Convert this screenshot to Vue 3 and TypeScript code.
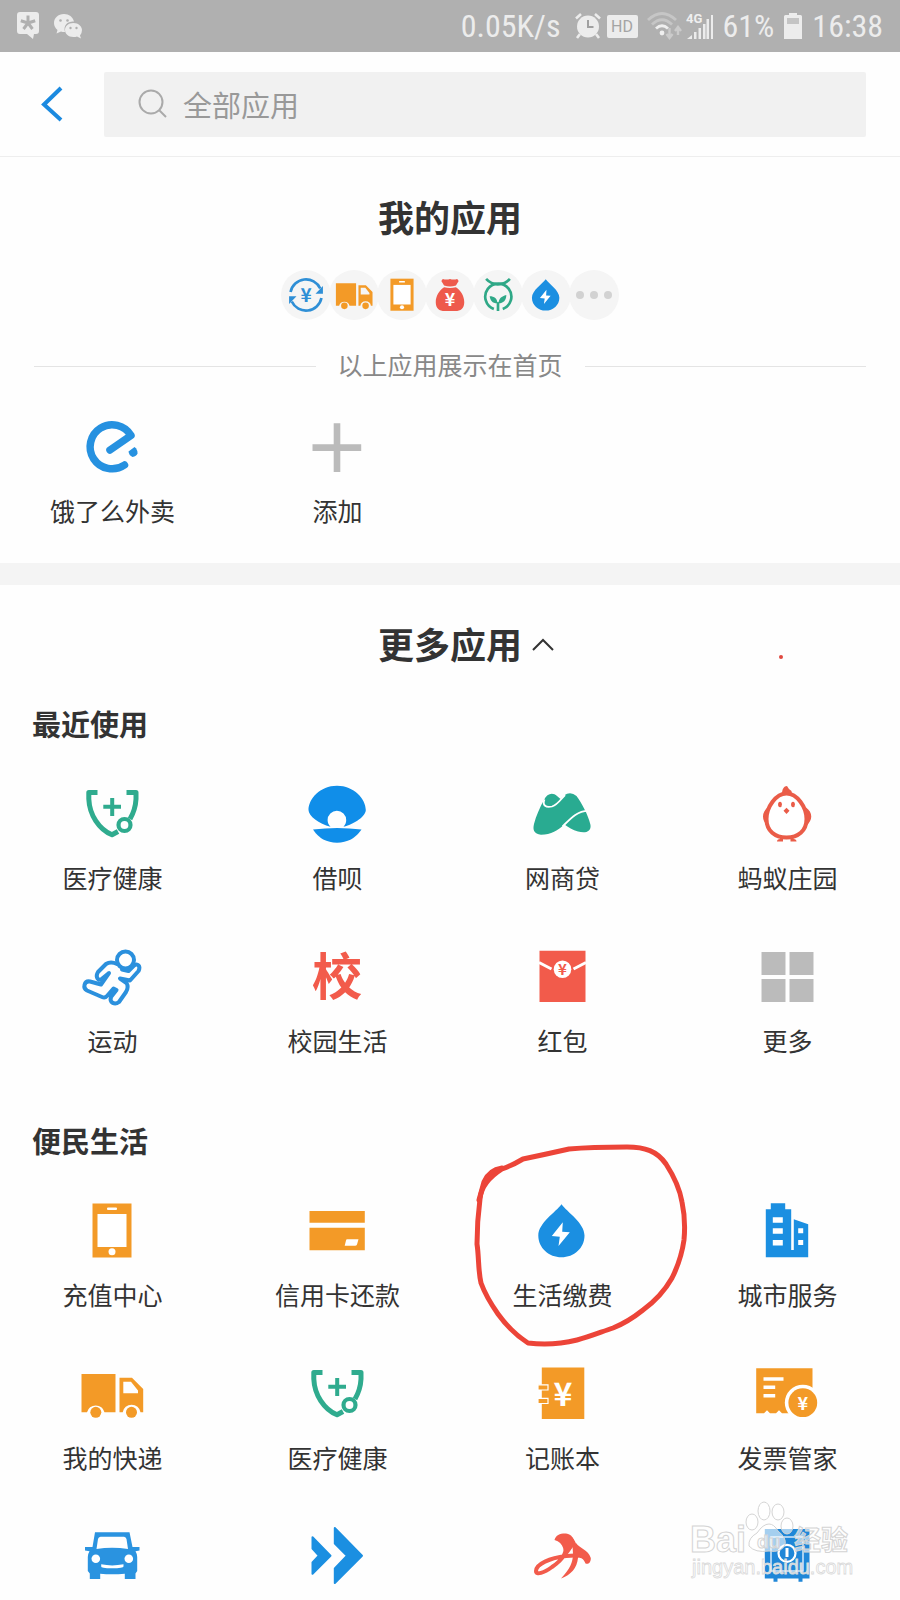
<script setup lang="ts">
import { ref } from 'vue'

interface AppItem {
  icon: string
  name: string
}

interface Glyph {
  text: string
  x: number
  y: number
  size: number
  fill: string
}

const keyword = ref('')
const expanded = ref(true)

// Characters that sit on top of an icon's shape, on the same 64 x 64 grid
const glyphs: Record<string, Glyph> = {
  transfer: { text: '¥', x: 32, y: 44, size: 32, fill: '#2f8fd6' },
  bag: { text: '¥', x: 32, y: 50, size: 30, fill: '#fff' },
  school: { text: '校', x: 32, y: 50, size: 50, fill: '#f25b4b' },
  packet: { text: '¥', x: 32.5, y: 30, size: 15, fill: '#f25b4b' },
  ledger: { text: '¥', x: 33, y: 44, size: 32, fill: '#fff' },
  invoice: { text: '¥', x: 47.8, y: 47.5, size: 18, fill: '#fff' },
}

const homeIcons: AppItem[] = [
  { icon: 'transfer', name: '转账' },
  { icon: 'truck', name: '我的快递' },
  { icon: 'phone', name: '充值中心' },
  { icon: 'bag', name: '余额宝' },
  { icon: 'sprout', name: '蚂蚁森林' },
  { icon: 'drop', name: '生活缴费' },
]

const myApps: AppItem[] = [
  { icon: 'ele', name: '饿了么外卖' },
  { icon: 'plus', name: '添加' },
]

const recent: AppItem[] = [
  { icon: 'shield', name: '医疗健康' },
  { icon: 'shell', name: '借呗' },
  { icon: 'bank', name: '网商贷' },
  { icon: 'chick', name: '蚂蚁庄园' },
  { icon: 'runner', name: '运动' },
  { icon: 'school', name: '校园生活' },
  { icon: 'packet', name: '红包' },
  { icon: 'more', name: '更多' },
]

const living: AppItem[] = [
  { icon: 'phone', name: '充值中心' },
  { icon: 'card', name: '信用卡还款' },
  { icon: 'drop', name: '生活缴费' },
  { icon: 'city', name: '城市服务' },
  { icon: 'truck', name: '我的快递' },
  { icon: 'shield', name: '医疗健康' },
  { icon: 'ledger', name: '记账本' },
  { icon: 'invoice', name: '发票管家' },
]

const livingMore: AppItem[] = [
  { icon: 'car', name: '车主服务' },
  { icon: 'arrows', name: '出行' },
  { icon: 'swoosh', name: '办事' },
  { icon: 'safe', name: '保险箱' },
]
</script>

<template>
  <div class="page">
    <!-- Shared icon shapes, all on a 64 x 64 grid -->
    <svg class="sprite" width="0" height="0" aria-hidden="true">
      <symbol id="transfer" viewBox="0 0 64 64">
        <g fill="none" stroke="#2f8fd6" stroke-width="4.500">
          <path d="M6 27A26.500 26.500 0 0 1 56 21" />
          <path d="M58 37A26.500 26.500 0 0 1 8 43" />
        </g>
        <path d="M60.500 17v13H48zM3.500 47V34H16z" fill="#2f8fd6" />
      </symbol>
      <symbol id="truck" viewBox="0 0 64 64">
        <g fill="#f39a27">
          <path d="M1.500 12H35.500V50.300H24.500A9 9 0 0 0 7 50.300H1.500z" />
          <path fill-rule="evenodd" d="M39.500 15.700H52L63.200 27V50.300H60.500A9 9 0 0 0 42.700 50.300H39.500zM43.300 19.700V31.300H58V28.500L51 19.700z" />
          <circle cx="15.800" cy="50.300" r="5.500" />
          <circle cx="51.500" cy="50.300" r="5.500" />
        </g>
      </symbol>
      <symbol id="phone" viewBox="0 0 64 64">
        <path d="M12.500 4.500h39v54h-39z" fill="#f39a27" />
        <path d="M17.500 15h29v33h-29z" fill="#fff" />
        <rect x="27" y="8.500" width="10" height="2.500" rx="1" fill="#fff" />
        <circle cx="32" cy="52.700" r="3.500" fill="#fff" />
      </symbol>
      <symbol id="bag" viewBox="0 0 64 64">
        <path d="M20 5q6 2 12 0q6 2 12 0q4 3 1 6l-3 5q-10 3-20 0l-3-5q-3-3 1-6z" fill="#ee5a4c" />
        <path d="M22 19q10 2 20 0C50 24 56 34 56 44C56 54 50 59 41 59H23C14 59 8 54 8 44C8 34 14 24 22 19z" fill="#ee5a4c" />
      </symbol>
      <symbol id="sprout" viewBox="0 0 64 64" fill="none" stroke="#2fa887" stroke-width="4.500">
        <path d="M12 5Q20 14 32 14T52 5" />
        <path d="M25 55.500A22 22 0 1 1 40 55.500" />
        <path d="M32 59V44" />
        <path d="M31 46C22 46 19 41 18 34C26 34 31 38 31 46zM33 46C33 38 38 34 46 32C46 41 41 46 33 46z" fill="#2fa887" stroke="none" />
      </symbol>
      <symbol id="drop" viewBox="0 0 64 64">
        <path d="M31.500 5.300C37 13 54.500 24 54.500 36.500C54.500 49 44 58.300 31.500 58.300S8.300 49 8.300 36.500C8.300 24 26 13 31.500 5.300z" fill="#1b8fe1" />
        <path d="M32.800 23.300L21.800 37L29.800 37.700L28.500 47L39.800 33.300L32.200 32.700z" fill="#fff" />
      </symbol>
      <symbol id="ele" viewBox="0 0 64 64">
        <path d="M30 35L51 20.500A22 22 0 1 0 44.500 50" fill="none" stroke="#2691e0" stroke-width="7.500" stroke-linecap="round" stroke-linejoin="round" />
        <path d="M48.500 36.500L54.500 32Q57.800 34.500 57.500 38.500Q56.500 41 52.500 42Q49 40.500 48.500 36.500z" fill="#2691e0" />
      </symbol>
      <symbol id="plus" viewBox="0 0 64 64">
        <path d="M28.700 8.300h6.600v21h20.900v6.600H35.300V57h-6.600V35.900H7.500v-6.600h21.200z" fill="#bbb" />
      </symbol>
      <symbol id="shield" viewBox="0 0 64 64" fill="none" stroke="#2fab8e">
        <path d="M17.500 10.500H8.800V17C9.500 33 19 47.500 32 52.800L38 49.500M46.500 10.500H56V17C55.600 25 53.500 31 50 37" stroke-width="5" stroke-linejoin="round" />
        <circle cx="44.500" cy="43" r="6" stroke-width="4.200" />
        <path d="M32.200 16v18M23.300 24.800H41" stroke-width="4" />
      </symbol>
      <symbol id="shell" viewBox="0 0 64 64" fill="#108ee9">
        <path d="M32 3.700C49 3.700 60.800 17 60.800 28C60.800 34 50 42 38.500 44.700C40.500 42.500 41.200 40.500 41.200 38A9.300 9.300 0 1 0 22.600 38C22.600 41 23.700 43 25.500 44.700C14 42 3.500 34 3.500 28C3.500 17 15 3.700 32 3.700z" />
        <path d="M8 47.500Q32 44.500 56.500 47.500Q47.500 60.700 32 60.700T8 47.500z" />
      </symbol>
      <symbol id="bank" viewBox="0 0 64 64">
        <path d="M14 18C17 11 23 10 27 14L30.500 17L34 13.500Q40.500 9 46.500 14C51 20 58 32 60.500 43C61.500 50 55 51.500 48 49.500C43 48 38 45 34.500 42.500C28 48 21 52.700 11 52.700C4 52 2.500 48 4 42C6 34 10 25 14 18z" fill="#29ab91" />
        <path d="M14.500 17.500C12 23.500 16 26 22 24.500C28 22.500 30 18 35 13M32.500 44.500C41 36 47 29 58 28.800" fill="none" stroke="#fff" stroke-width="1.800" />
      </symbol>
      <symbol id="chick" viewBox="0 0 64 64">
        <g fill="#ea5c48">
          <path d="M27 12C27 7 29 4 32 4Q34 8 36.500 9L37 13z" />
          <path d="M12.500 25.500C7 30 6 38 12.500 44zM51 25.500C57.500 30 58.500 38 51 44z" />
          <path d="M28 56v3.500h-6q0-2.500 3-2.500v-2zM35.500 56v3.500h6q0-2.500-3-2.500v-2z" />
        </g>
        <path d="M31.500 11.500C42 11.500 51.500 25 51.500 37C51.500 49 43 55.500 31.500 55.500S11.500 49 11.500 37C11.500 25 21 11.500 31.500 11.500z" fill="#fff" stroke="#ea5c48" stroke-width="4" />
        <g fill="#ea5c48">
          <ellipse cx="25" cy="22.500" rx="1.900" ry="2.800" />
          <ellipse cx="38" cy="22.500" rx="1.900" ry="2.800" />
          <path d="M31.500 25.700L34.500 28.800L31.500 32L28.500 28.800z" />
        </g>
      </symbol>
      <symbol id="runner" viewBox="0 0 64 64" fill="none" stroke="#2b90dd" stroke-width="4" stroke-linejoin="round" stroke-linecap="round">
        <path d="M37 19C33 17 29 17 26 19L18 27C15.500 31 17 35.500 21 34.500L29 28L21 39.500L10 36.500C4 35.500 2.500 43 7 45.500L22 52Q25 53.300 27 51L33.500 43.500L36.500 45L31 52C29 58 35 60 39 57L46 47Q49 42 46.500 38L40 33.500L50 35.500L58.500 26C61 21 57.500 18 54 20.500L48.500 26L42 24.500" />
        <circle cx="45.500" cy="15" r="8.500" fill="#fff" />
      </symbol>
      <symbol id="packet" viewBox="0 0 64 64">
        <path d="M9.500 5.700h46V57h-46z" fill="#f25b4b" />
        <path d="M9 17.500L21.500 24M56 17.500L43.500 24" stroke="#fff" stroke-width="3" />
        <circle cx="32.500" cy="24.300" r="8.800" fill="#fff" />
      </symbol>
      <symbol id="more" viewBox="0 0 64 64">
        <path d="M6.500 7h24v23h-24zM34.500 7h24v23h-24zM6.500 34h24v23h-24zM34.500 34h24v23h-24z" fill="#bbb" />
      </symbol>
      <symbol id="card" viewBox="0 0 64 64">
        <path d="M4.500 12h55.300v11.700H4.500zM4.500 28.700h55.300v22.500H4.500z" fill="#f39a27" />
        <path d="M42 40.300H53.500L52 45.500Q51.500 46.700 50 46.700H39.700L41 41.500Q41.300 40.300 42 40.300z" fill="#fff" />
      </symbol>
      <symbol id="city" viewBox="0 0 64 64">
        <path d="M10.800 10.300h5v-6h14.400v6h6V51h2.600V20.300L53.200 25.300V58.300H10.800z" fill="#1b8fe1" />
        <path d="M17.800 18.300h10v5.400h-10zM17.800 29.300h10v5.400h-10zM17.800 41h10v5.400h-10zM43.200 29.300h5v5h-5zM43.200 41h5v5h-5z" fill="#fff" />
      </symbol>
      <symbol id="ledger" viewBox="0 0 64 64">
        <path d="M11.800 5.500h42.500V57H11.800z" fill="#f39a27" />
        <path d="M8 22.800h10v5.200H8zM8 36.300h10v5.200H8z" fill="#f39a27" stroke="#fff" stroke-width="1.200" />
      </symbol>
      <symbol id="invoice" viewBox="0 0 64 64">
        <path d="M1.200 6.300h56.300v45H27l-3-3-3 3h-6l-3-3-3 3H1.200z" fill="#f39a27" />
        <path d="M8.500 17h20M8.500 25.300h11.700M8.500 33.700h11.700" stroke="#fff" stroke-width="3.600" />
        <circle cx="47.800" cy="40.700" r="18" fill="#fff" />
        <circle cx="47.800" cy="40.700" r="14.400" fill="#f39a27" />
      </symbol>
      <symbol id="car" viewBox="0 0 64 64">
        <path fill-rule="evenodd" d="M15 7.300H49.500L52.500 22H59.500V25.500L55.500 26.300Q57.200 29 57.200 32V46L55.500 48.500V54H44.800V48.700Q32 50 20.200 48.700V54H9.800V48.500L7.800 46V32Q7.800 29 9.500 26.300L5 25.500V22H12.500zM20.500 11.700Q18.500 12 18 14L16.500 24Q32 21.300 48 24L46.500 14Q46 12 44 11.700z" fill="#2a93e0" />
        <circle cx="15.800" cy="33.700" r="4.300" fill="#fff" />
        <circle cx="48.800" cy="33.700" r="4.300" fill="#fff" />
        <path d="M21.200 39.300Q32 41.500 43.500 39.300V41.500Q43.500 43.300 32 43.300T21.200 41.500z" fill="#fff" />
      </symbol>
      <symbol id="arrows" viewBox="0 0 64 64" fill="#1b8fe1" stroke="#1b8fe1" stroke-width="2" stroke-linejoin="round">
        <path d="M7.500 12.200L25.500 30.700L7.500 48.700V37.500L13.800 30.700L7.500 23.500z" />
        <path d="M29.800 3L57 30.700L29.800 58V43.500L42 30.700L29.800 18.500z" />
      </symbol>
      <symbol id="swoosh" viewBox="0 0 64 64" fill="#f25b4b">
        <path d="M35 16C39 27 31 36 22 42C14 48 6 50.500 6 46C6 39 20 33 36 31C44 30 50 30 54 32" fill="none" stroke="#f25b4b" stroke-width="4" />
        <path d="M24.500 15C26 10 30 8.300 36 8.500C42 9 44 14 45 20C42 22 40 28 33 34C35 26 34 18 24.500 15z" />
        <path d="M42 12C47 18 49 26 48 33C47 43 41 50 31 53.500C40 44 43 37 43 29z" />
        <path d="M46 18C50 24 58 24 60.800 33C61 38 58 39.500 55.500 38.500C54 34 50 31 46 31z" />
      </symbol>
      <symbol id="safe" viewBox="0 0 64 64">
        <path d="M9.800 4h44.700v49.500h-7v3.200h-4v-3.200H22.500v3.200h-4v-3.200H9.800z" fill="#2087d8" />
        <path d="M16 12h32v34H16zM16 17v6M16 32v6" fill="none" stroke="#d5eafa" stroke-width="1.500" />
        <circle cx="32" cy="28.300" r="8.500" fill="none" stroke="#fff" stroke-width="2.200" />
        <path d="M32 23v9" stroke="#fff" stroke-width="3" />
      </symbol>
    </svg>

    <div class="status">
      <svg width="24" height="30" viewBox="0 0 24 30">
        <path d="M4 1h16q3 0 3 3v16q0 3-3 3h-2l-1 5-6-5H4q-3 0-3-3V4q0-3 3-3z" fill="#ececec" />
        <path d="M12 12V4.500M12 12L4.800 9.700M12 12L19.200 9.700M12 12L7.500 18M12 12L16.500 18" stroke="#b0b0b0" stroke-width="3" />
      </svg>
      <svg class="wechat" width="30" height="26" viewBox="0 0 30 26">
        <path d="M11 1C5 1 1 5 1 10q0 4 3.500 7L3.500 20.500 8 18.500q2 .6 4 .5C10 12 15 8 21 8.500 20 4 16 1 11 1z" fill="#ececec" />
        <path d="M20.500 10C15 10 12 13.500 12 17s3 7 8.500 7q2 0 3.500-.5l4 2-1-3Q29 20 29 17c0-3.500-3.500-7-8.500-7z" fill="#ececec" />
        <g fill="#b0b0b0"><circle cx="7.500" cy="7.500" r="1.300" /><circle cx="14.500" cy="7.500" r="1.300" /><circle cx="17.500" cy="15" r="1.200" /><circle cx="23.500" cy="15" r="1.200" /></g>
      </svg>
      <span class="reading speed">0.05K/s</span>
      <svg class="alarm" width="26" height="28" viewBox="0 0 26 28">
        <circle cx="13" cy="14.500" r="11" fill="#ececec" />
        <path d="M1 6.500L6 2M25 6.500L20 2M5 22l-3 4M21 22l3 4" stroke="#ececec" stroke-width="2.600" />
        <path d="M13 8v7h5.500" fill="none" stroke="#a0a0a0" stroke-width="2" />
      </svg>
      <span class="hd">HD</span>
      <svg class="wifi" width="36" height="28" viewBox="0 0 36 28">
        <g fill="none" stroke="#c6c6c6" stroke-width="2.800"><path d="M1 8Q15-5 29 8" /><path d="M5 12.500Q15 3 25 12.500" /></g>
        <path d="M9 16.500Q15 11 21 16.500" fill="none" stroke="#efefef" stroke-width="2.800" />
        <circle cx="15" cy="21" r="2.400" fill="#efefef" />
        <path d="M22.500 16v8M19.500 22l3 4 3-4M31 23v-6M28 19l3-4 3 4" fill="none" stroke="#cbcbcb" stroke-width="2.400" />
      </svg>
      <svg class="signal" width="28" height="28" viewBox="0 0 28 28">
        <text x="0" y="11" font-size="13" fill="#efefef">4G</text>
        <path d="M1 27l5-4v4zM8 20h2.500v7H8zM12.500 16H15v11h-2.500zM17 12h2.500v15H17zM20.500 7H23v20h-2.500zM25 3h2v24h-2z" fill="#ececec" />
      </svg>
      <span class="reading">61%</span>
      <svg class="battery" width="18" height="28" viewBox="0 0 18 28">
        <path d="M5 1h8v2h3.500q1.500 0 1.500 1.500V27H0V4.500Q0 3 1.500 3H5z" fill="#ececec" />
        <path d="M3 6h12v6H3z" fill="#c4c4c4" />
      </svg>
      <span class="reading">16:38</span>
    </div>

    <header class="header">
      <button class="back" type="button" aria-label="返回">
        <svg width="24" height="36" viewBox="0 0 24 36"><path d="M21 2L4 18.500L21 34" fill="none" stroke="#1b8ae0" stroke-width="4" /></svg>
      </button>
      <label class="search">
        <svg width="30" height="30" viewBox="0 0 30 30" fill="none" stroke="#aaa" stroke-width="2"><circle cx="13" cy="13" r="11.500" /><path d="M21 21l7 7" /></svg>
        <input v-model="keyword" type="search" aria-label="全部应用" placeholder="全部应用" />
      </label>
    </header>

    <main>
      <section class="mine">
        <h1 class="heading">我的应用</h1>
        <div class="bubbles">
          <span v-for="item in homeIcons" :key="item.icon" class="bubble" role="img" :aria-label="item.name">
            <svg width="38" height="38" viewBox="0 0 64 64">
              <use :href="'#' + item.icon" width="64" height="64" />
              <text v-if="glyphs[item.icon]" class="glyph" :x="glyphs[item.icon].x" :y="glyphs[item.icon].y" :font-size="glyphs[item.icon].size" :fill="glyphs[item.icon].fill">{{ glyphs[item.icon].text }}</text>
            </svg>
          </span>
          <span class="bubble">
            <svg width="38" height="38" viewBox="0 0 38 38" fill="#d2d2d2"><circle cx="5" cy="19" r="4" /><circle cx="19" cy="19" r="4" /><circle cx="33" cy="19" r="4" /></svg>
          </span>
        </div>
        <p class="divider">以上应用展示在首页</p>
        <div class="grid">
          <button v-for="item in myApps" :key="item.name" class="tile" type="button">
            <svg class="icon" width="64" height="64"><use :href="'#' + item.icon" /></svg>
            <span>{{ item.name }}</span>
          </button>
        </div>
      </section>

      <section class="others">
        <h1 class="heading">
          <button class="toggle" type="button" :aria-expanded="expanded" @click="expanded = !expanded">
            更多应用
            <svg class="caret" width="24" height="16" viewBox="0 0 24 16"><path d="M2 13L12 3L22 13" fill="none" stroke="#333" stroke-width="2" /></svg>
          </button>
          <i class="dot"></i>
        </h1>

        <template v-if="expanded">
          <h2 class="group">最近使用</h2>
          <div class="grid">
            <button v-for="item in recent" :key="item.name" class="tile" type="button">
              <svg class="icon" width="64" height="64" viewBox="0 0 64 64">
                <use :href="'#' + item.icon" width="64" height="64" />
                <text v-if="glyphs[item.icon]" class="glyph" :x="glyphs[item.icon].x" :y="glyphs[item.icon].y" :font-size="glyphs[item.icon].size" :fill="glyphs[item.icon].fill">{{ glyphs[item.icon].text }}</text>
              </svg>
              <span>{{ item.name }}</span>
            </button>
          </div>

          <h2 class="group">便民生活</h2>
          <div class="grid">
            <button v-for="item in living" :key="item.name" class="tile" type="button">
              <svg class="icon" width="64" height="64" viewBox="0 0 64 64">
                <use :href="'#' + item.icon" width="64" height="64" />
                <text v-if="glyphs[item.icon]" class="glyph" :x="glyphs[item.icon].x" :y="glyphs[item.icon].y" :font-size="glyphs[item.icon].size" :fill="glyphs[item.icon].fill">{{ glyphs[item.icon].text }}</text>
              </svg>
              <span>{{ item.name }}</span>
              <svg v-if="item.icon === 'drop'" class="scribble" width="225" height="210" viewBox="470 1140 225 210" fill="none" stroke="#ec4438" stroke-width="5" stroke-linecap="round" stroke-linejoin="round">
                <path d="M503 1169Q514 1165 524 1159Q548 1154 570 1149C592 1147 610 1147 628 1147C646 1147 658 1151 667 1164C676 1178 681 1190 683 1202C686 1216 686 1229 685 1240C683 1254 679 1266 673 1278C665 1292 655 1302 644 1310C634 1318 624 1324 614 1328C602 1332 590 1337 578 1340C562 1344 545 1345 529 1343C518 1336 507 1325 499 1314C492 1304 486 1294 482 1283C479 1270 480 1257 478 1244C478 1228 479 1214 481 1199C482 1186 492 1176 503 1169" />
                <path d="M503 1168Q490 1170 485 1182L480 1200" />
              </svg>
            </button>
          </div>
          <div class="grid last">
            <button v-for="item in livingMore" :key="item.name" class="tile" type="button" :aria-label="item.name">
              <svg class="icon" width="64" height="64"><use :href="'#' + item.icon" /></svg>
            </button>
            <svg class="mark" width="170" height="90" viewBox="0 0 170 90">
              <g fill="#fff" fill-opacity="0.6" stroke="#d4d4d4" stroke-width="1">
                <ellipse cx="64" cy="23" rx="6" ry="8" /><ellipse cx="76" cy="12" rx="6" ry="9" /><ellipse cx="90" cy="13" rx="6" ry="8" /><ellipse cx="99" cy="27" rx="6" ry="8" />
                <path d="M81 25Q86 25 90 32Q99 39 97 46Q93 54 81 52Q67 54 61 47Q60 39 69 34Q75 25 81 25z" />
                <text x="2" y="53" font-size="36" font-weight="700">Bai</text>
                <text x="69" y="49" font-size="19" font-weight="700">du</text>
                <text class="cjk" x="106" y="51" font-size="27" font-weight="700">经验</text>
              </g>
              <text x="4" y="75" font-size="20" fill="#fff" fill-opacity="0.8" stroke="#dadada" stroke-width="0.800">jingyan.baidu.com</text>
            </svg>
          </div>
        </template>
      </section>
    </main>
  </div>
</template>

<style>
body {
  margin: 0;
  background: #fefefe;
}
</style>

<style scoped>
.page {
  min-height: 100vh;
  overflow: hidden;
  background: #fefefe;
  color: #333;
  font-family: "Liberation Sans", "Noto Sans CJK SC", sans-serif;
}
.sprite {
  position: absolute;
}
svg {
  display: block;
  flex: none;
}
button {
  padding: 0;
  border: 0;
  background: none;
  color: inherit;
  font: inherit;
}
.icon {
  margin-right: 2px;
  overflow: visible;
}
.glyph {
  font-family: "Noto Sans CJK SC", sans-serif;
  font-weight: 700;
  text-anchor: middle;
}
.status {
  display: flex;
  align-items: center;
  height: 52px;
  padding: 0 17px 0 16px;
  background: #b0b0b0;
  color: #ececec;
}
.wechat {
  margin-left: 13px;
}
.reading {
  font-family: "Roboto Condensed", Roboto, sans-serif;
  font-size: 32px;
  line-height: 52px;
}
.speed {
  margin-left: auto;
}
.alarm {
  margin-left: 14px;
}
.hd {
  width: 31px;
  margin: 0 9px 0 6px;
  border-radius: 2px;
  background: #ececec;
  color: #a4a4a4;
  font-family: Roboto, sans-serif;
  font-size: 16px;
  line-height: 23px;
  text-align: center;
}
.signal {
  margin: 0 9px 0 3px;
  font-family: Roboto, sans-serif;
  font-weight: 700;
}
.battery {
  margin: 0 10px;
}
.header {
  display: flex;
  align-items: center;
  height: 104px;
  padding-right: 34px;
  border-bottom: 1px solid #eee;
}
.back {
  display: flex;
  justify-content: center;
  width: 104px;
}
.search {
  display: flex;
  flex: 1;
  align-items: center;
  gap: 15px;
  height: 65px;
  padding-left: 34px;
  border-radius: 2px;
  background: #f1f1f1;
}
.search input {
  flex: 1;
  min-width: 0;
  padding: 0;
  border: 0;
  outline: 0;
  background: none;
  color: #333;
  font-family: "Noto Sans CJK SC", sans-serif;
  font-size: 29px;
  line-height: 44px;
}
.search input::placeholder {
  color: #999;
  opacity: 1;
}
.mine {
  padding: 38px 0 3px;
  border-bottom: 22px solid #f4f4f4;
}
.heading {
  position: relative;
  margin: 0;
  font-size: 36px;
  font-weight: 700;
  line-height: 50px;
  text-align: center;
}
.bubbles {
  display: flex;
  justify-content: center;
  margin: 25px 0 28px;
}
.bubble {
  display: flex;
  align-items: center;
  justify-content: center;
  width: 50px;
  height: 50px;
  border-radius: 50%;
  background: #f5f5f5;
}
.bubble + .bubble {
  margin-left: -2px;
}
.divider {
  display: flex;
  align-items: center;
  gap: 22px;
  margin: 0 34px 13px;
  color: #888;
  font-size: 25px;
  line-height: 36px;
}
.divider::before,
.divider::after {
  flex: 1;
  height: 1px;
  background: #e4e4e4;
  content: "";
}
.grid {
  display: grid;
  position: relative;
  grid-template-columns: repeat(4, 1fr);
}
.tile {
  display: flex;
  position: relative;
  flex-direction: column;
  align-items: center;
  gap: 15px;
  padding: 18px 0 30px;
  font-size: 25px;
  line-height: 36px;
}
.last .tile {
  padding-bottom: 0;
}
.others {
  padding-top: 37px;
}
.toggle {
  position: relative;
}
.caret {
  position: absolute;
  top: 50%;
  left: 100%;
  margin: -10px 0 0 9px;
}
.dot {
  position: absolute;
  right: 117px;
  bottom: 13px;
  width: 4px;
  height: 4px;
  border-radius: 50%;
  background: #e0483f;
}
.group {
  margin: 0;
  padding: 32px 32px 15px;
  font-size: 29px;
  font-weight: 700;
  line-height: 45px;
}
.grid + .group {
  padding-top: 31px;
}
.scribble {
  position: absolute;
  top: -41px;
  left: calc(50% - 94px);
  pointer-events: none;
}
.mark {
  position: absolute;
  right: 42px;
  bottom: 0;
  font-family: "Liberation Sans", sans-serif;
  pointer-events: none;
}
.mark .cjk {
  font-family: "Noto Sans CJK SC", sans-serif;
}
</style>
